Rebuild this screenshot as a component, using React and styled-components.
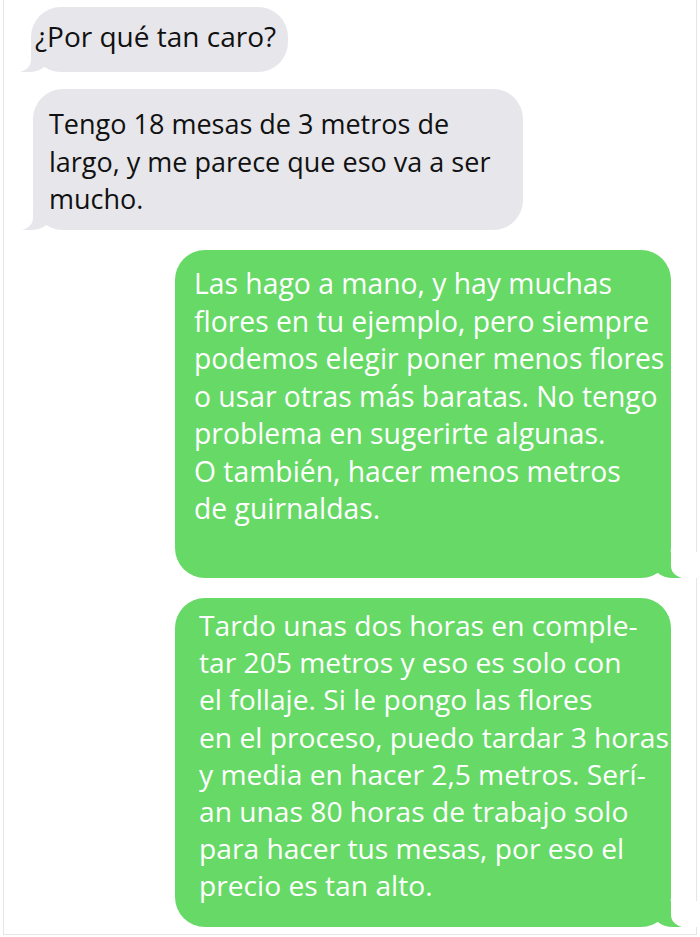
import React from "react";
import styled, { createGlobalStyle } from "styled-components";

const GlobalStyle = createGlobalStyle`
  html, body {
    margin: 0;
    padding: 0;
    background: #ffffff;
  }
`;

const Frame = styled.div`
  box-sizing: border-box;
  width: 700px;
  height: 937px;
  padding: 0 3px 2px 3px;
  background: #ffffff;
  overflow: hidden;
`;

const Screen = styled.div`
  box-sizing: border-box;
  height: 100%;
  border-left: 1px solid #e6e6e6;
  border-right: 1px solid #e6e6e6;
  border-bottom: 1px solid #e6e6e6;
  display: flex;
  flex-direction: column;
  padding-top: 7px;
  font-family: "Open Sans", "Noto Sans", sans-serif;
`;

const Bubble = styled.div`
  position: relative;
  box-sizing: border-box;
  width: ${(p) => p.$width}px;
  height: ${(p) => p.$height}px;
  margin-top: ${(p) => p.$gap || 0}px;
  margin-left: ${(p) => p.$left}px;
  padding: ${(p) => p.$pad};
  border-radius: 30px;
  background: ${(p) => (p.$me ? "#67d966" : "#e6e6eb")};
  color: ${(p) => (p.$me ? "#ffffff" : "#111111")};
  font-size: ${(p) => p.$size}px;
  line-height: ${(p) => p.$lh}px;

  /* tail */
  &::before {
    content: "";
    position: absolute;
    bottom: 0;
    ${(p) => (p.$me ? "right: -10px;" : "left: -10px;")}
    width: 30px;
    height: 26px;
    background: ${(p) => (p.$me ? "#67d966" : "#e6e6eb")};
    ${(p) =>
      p.$me
        ? "border-bottom-left-radius: 22px 18px;"
        : "border-bottom-right-radius: 22px 18px;"}
  }

  /* carves the tail curve */
  &::after {
    content: "";
    position: absolute;
    bottom: 0;
    ${(p) => (p.$me ? "right: -26px;" : "left: -26px;")}
    width: 26px;
    height: 26px;
    background: #ffffff;
    ${(p) =>
      p.$me
        ? "border-bottom-left-radius: 14px 12px;"
        : "border-bottom-right-radius: 14px 12px;"}
  }
`;

const Line = styled.span`
  position: relative;
  z-index: 1;
  display: block;
  white-space: nowrap;
`;

const messages = [
  {
    me: false,
    left: 27,
    width: 257,
    height: 65,
    gap: 0,
    size: 28,
    lh: 37,
    pad: "11px 6px 0 4px",
    lines: ["¿Por qué tan caro?"],
  },
  {
    me: false,
    left: 29,
    width: 490,
    height: 141,
    gap: 17,
    size: 27,
    lh: 37.5,
    pad: "16px 10px 0 16px",
    lines: [
      "Tengo 18 mesas de 3 metros de",
      "largo, y me parece que eso va a ser",
      "mucho.",
    ],
  },
  {
    me: true,
    left: 171,
    width: 496,
    height: 328,
    gap: 20,
    size: 28.3,
    lh: 37.5,
    pad: "15px 4px 0 19px",
    lines: [
      "Las hago a mano, y hay muchas",
      "flores en tu ejemplo, pero siempre",
      "podemos elegir poner menos flores",
      "o usar otras más baratas. No tengo",
      "problema en sugerirte algunas.",
      "O también, hacer menos metros",
      "de guirnaldas.",
    ],
  },
  {
    me: true,
    left: 171,
    width: 496,
    height: 329,
    gap: 20,
    size: 28.2,
    lh: 37.2,
    pad: "9px 4px 0 24px",
    lines: [
      "Tardo unas dos horas en comple-",
      "tar 205 metros y eso es solo con",
      "el follaje. Si le pongo las flores",
      "en el proceso, puedo tardar 3 horas",
      "y media en hacer 2,5 metros. Serí-",
      "an unas 80 horas de trabajo solo",
      "para hacer tus mesas, por eso el",
      "precio es tan alto.",
    ],
  },
];

export default function App() {
  return (
    <>
      <GlobalStyle />
      <Frame>
        <Screen>
          {messages.map((m, i) => (
            <Bubble
              key={i}
              $me={m.me}
              $left={m.left}
              $width={m.width}
              $height={m.height}
              $gap={m.gap}
              $size={m.size}
              $lh={m.lh}
              $pad={m.pad}
            >
              {m.lines.map((l, j) => (
                <Line key={j}>{l}</Line>
              ))}
            </Bubble>
          ))}
        </Screen>
      </Frame>
    </>
  );
}
